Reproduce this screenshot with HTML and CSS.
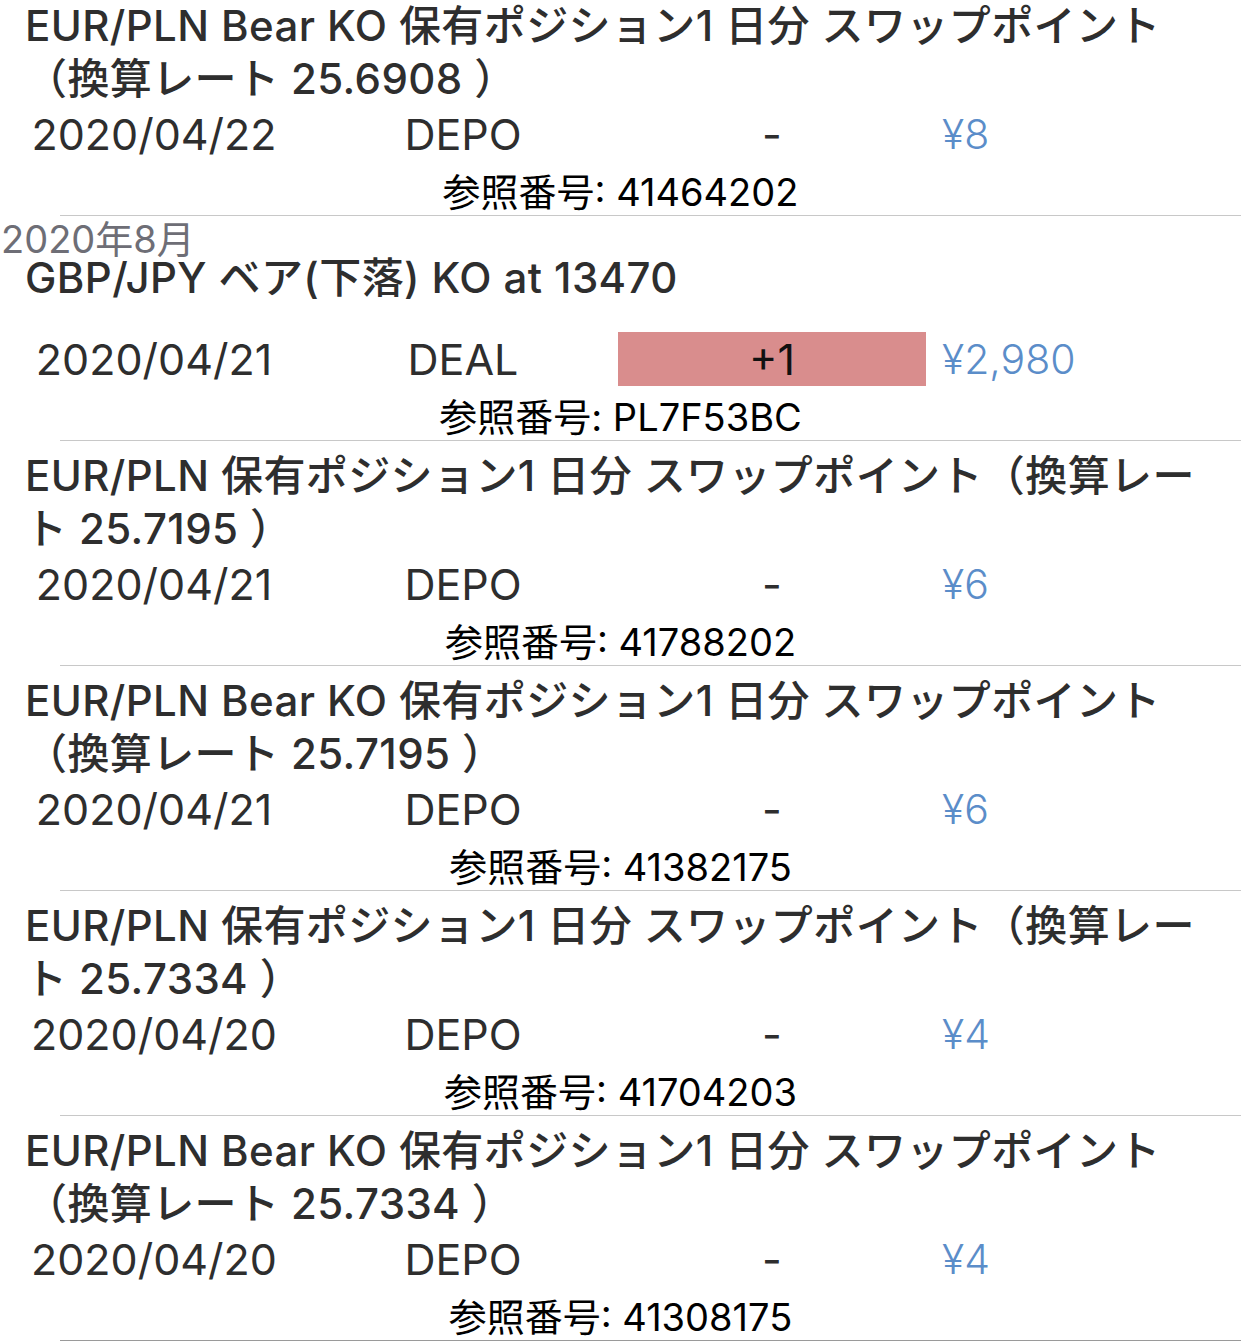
FILE: index.html
```html
<!DOCTYPE html>
<html lang="ja">

<head>
    <meta charset="UTF-8">
    <meta name="viewport" content="width=device-width, initial-scale=1.0">
    <title>取引履歴</title>
    <link rel="stylesheet" href="styles.css">
</head>

<body>
    <div class="list">

        <div class="entry">
            <div class="entry-title">EUR/PLN Bear KO 保有ポジション1 日分 スワップポイント<br>（換算レート 25.6908 ）</div>
            <div class="entry-row">
                <span class="cell">2020/04/22</span>
                <span class="cell">DEPO</span>
                <span class="cell">-</span>
                <span class="cell amount">¥8</span>
            </div>
            <div class="entry-ref">参照番号: 41464202</div>
        </div>

        <div class="entry">
            <!-- スクロール中に上に固定される月見出し -->
            <div class="month">2020年8月</div>
            <div class="entry-title">GBP/JPY ベア(下落) KO at 13470</div>
            <div class="entry-row">
                <span class="cell">2020/04/21</span>
                <span class="cell">DEAL</span>
                <span class="cell qty-up">+1</span>
                <span class="cell amount">¥2,980</span>
            </div>
            <div class="entry-ref">参照番号: PL7F53BC</div>
        </div>

        <div class="entry">
            <div class="entry-title">EUR/PLN 保有ポジション1 日分 スワップポイント（換算レー<br>ト 25.7195 ）</div>
            <div class="entry-row">
                <span class="cell">2020/04/21</span>
                <span class="cell">DEPO</span>
                <span class="cell">-</span>
                <span class="cell amount">¥6</span>
            </div>
            <div class="entry-ref">参照番号: 41788202</div>
        </div>

        <div class="entry">
            <div class="entry-title">EUR/PLN Bear KO 保有ポジション1 日分 スワップポイント<br>（換算レート 25.7195 ）</div>
            <div class="entry-row">
                <span class="cell">2020/04/21</span>
                <span class="cell">DEPO</span>
                <span class="cell">-</span>
                <span class="cell amount">¥6</span>
            </div>
            <div class="entry-ref">参照番号: 41382175</div>
        </div>

        <div class="entry">
            <div class="entry-title">EUR/PLN 保有ポジション1 日分 スワップポイント（換算レー<br>ト 25.7334 ）</div>
            <div class="entry-row">
                <span class="cell">2020/04/20</span>
                <span class="cell">DEPO</span>
                <span class="cell">-</span>
                <span class="cell amount">¥4</span>
            </div>
            <div class="entry-ref">参照番号: 41704203</div>
        </div>

        <div class="entry">
            <div class="entry-title">EUR/PLN Bear KO 保有ポジション1 日分 スワップポイント<br>（換算レート 25.7334 ）</div>
            <div class="entry-row">
                <span class="cell">2020/04/20</span>
                <span class="cell">DEPO</span>
                <span class="cell">-</span>
                <span class="cell amount">¥4</span>
            </div>
            <div class="entry-ref">参照番号: 41308175</div>
        </div>

    </div>
</body>

</html>
```

FILE: styles.css
```css
body {
    margin: 0;
    font-family: 'Inter', 'Noto Sans CJK JP', sans-serif;
    background-color: #fff;
    color: #333;
    overflow: hidden;
}

.list {
    margin-top: -9px;
}

.entry {
    position: relative;
    padding-top: 8px;
}

.entry::after {
    content: "";
    display: block;
    height: 1px;
    margin-left: 60px;
    background-color: #c8c8c8;
}

.entry:last-child::after {
    background-color: #9a9a9a;
}

.entry-title {
    height: 106px;
    display: flex;
    flex-direction: column;
    justify-content: center;
    padding-left: 25px;
    font-size: 42px;
    line-height: 53px;
    letter-spacing: 0.4px;
    font-weight: 500;
    white-space: nowrap;
    color: #2e2e2e;
}

.entry-row {
    display: grid;
    grid-template-columns: repeat(4, 308px);
    column-gap: 1px;
    height: 54px;
    margin-top: 2px;
    font-size: 43px;
    color: #2e2e2e;
}

.cell {
    text-align: center;
    line-height: 54px;
}

.qty-up {
    background-color: #d98d8d;
    color: #111;
}

.amount {
    text-align: left;
    padding-left: 15px;
    font-size: 41px;
    font-weight: 300;
    color: #5b8dc9;
}

.entry-ref {
    height: 54px;
    box-sizing: border-box;
    padding-top: 8px;
    line-height: 46px;
    text-align: center;
    font-size: 38px;
    color: #000;
}

.month {
    position: absolute;
    top: 0;
    left: 1px;
    font-size: 38px;
    line-height: 46px;
    color: #6e6e76;
}
```
